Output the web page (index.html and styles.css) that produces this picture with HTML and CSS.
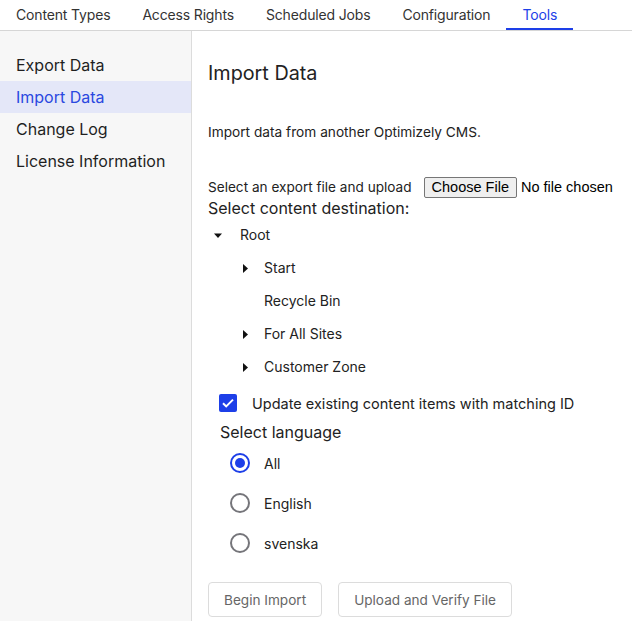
FILE: index.html
```html
<!DOCTYPE html>
<html lang="en">
<head>
<meta charset="utf-8">
<title>Import Data</title>
<link rel="stylesheet" href="styles.css">
</head>
<body>
<nav class="tabs">
  <a class="tab">Content Types</a>
  <a class="tab">Access Rights</a>
  <a class="tab">Scheduled Jobs</a>
  <a class="tab">Configuration</a>
  <a class="tab active">Tools</a>
</nav>
<div class="layout">
  <aside class="sidebar">
    <a class="side-item">Export Data</a>
    <a class="side-item active">Import Data</a>
    <a class="side-item">Change Log</a>
    <a class="side-item">License Information</a>
  </aside>
  <main class="main">
    <h1 class="title">Import Data</h1>
    <p class="desc">Import data from another Optimizely CMS.</p>
    <div class="file-row">
      <span class="file-label">Select an export file and upload</span>
      <span class="file-btn">Choose File</span>
      <span class="file-status">No file chosen</span>
    </div>
    <div class="dest-label">Select content destination:</div>
    <ul class="tree">
      <li class="node root">
        <svg class="caret" viewBox="0 0 16 16"><path d="M4 6.5h8l-4 4.5z"/></svg>
        <span>Root</span>
      </li>
      <li class="node child">
        <svg class="caret" viewBox="0 0 16 16"><path d="M9 4l5 4.5-5 4.5z"/></svg>
        <span>Start</span>
      </li>
      <li class="node child">
        <span class="caret"></span>
        <span>Recycle Bin</span>
      </li>
      <li class="node child">
        <svg class="caret" viewBox="0 0 16 16"><path d="M9 4l5 4.5-5 4.5z"/></svg>
        <span>For All Sites</span>
      </li>
      <li class="node child">
        <svg class="caret" viewBox="0 0 16 16"><path d="M9 4l5 4.5-5 4.5z"/></svg>
        <span>Customer Zone</span>
      </li>
    </ul>
    <label class="check-row">
      <span class="checkbox"><svg viewBox="0 0 18 18"><path d="M4 9.2l3.2 3.2L14 5.6" fill="none" stroke="#fff" stroke-width="2"/></svg></span>
      <span>Update existing content items with matching ID</span>
    </label>
    <div class="lang-label">Select language</div>
    <div class="radios">
      <label class="radio-row"><span class="radio checked"></span><span>All</span></label>
      <label class="radio-row"><span class="radio"></span><span>English</span></label>
      <label class="radio-row"><span class="radio"></span><span>svenska</span></label>
    </div>
    <div class="actions">
      <button class="btn">Begin Import</button>
      <button class="btn">Upload and Verify File</button>
    </div>
  </main>
</div>
</body>
</html>
```
FILE: styles.css
```css
* { box-sizing: border-box; }
html, body { margin: 0; padding: 0; }
body {
  font-family: Inter, "Noto Sans", "Liberation Sans", sans-serif;
  color: #222;
  background: #fff;
  width: 632px;
  height: 621px;
  overflow: hidden;
}
.tabs {
  display: flex;
  height: 31px;
  border-bottom: 1px solid #d6d6d6;
}
.tab {
  padding: 0 16px;
  font-size: 14px;
  letter-spacing: -0.16px;
  line-height: 30px;
  height: 30px;
  color: #333;
}
.tab.active {
  color: #1d3fe8;
  border-bottom: 2px solid #1d3fe8;
  margin-bottom: -1px;
  height: 30px;
}
.layout {
  display: flex;
  height: 590px;
}
.sidebar {
  width: 192px;
  flex: none;
  background: #f7f7f7;
  border-right: 1px solid #dcdcdc;
  padding-top: 18px;
  display: flex;
  flex-direction: column;
}
.side-item {
  display: block;
  height: 32px;
  line-height: 32px;
  padding-left: 16px;
  font-size: 16px;
  color: #1f1f1f;
}
.side-item.active {
  background: #e4e7f8;
  color: #2a48e0;
}
.main {
  flex: 1;
  padding: 30px 0 0 16px;
}
.title {
  margin: 0;
  font-size: 19.8px;
  line-height: 24px;
  font-weight: 400;
  color: #222;
}
.desc {
  margin: 37px 0 0;
  font-size: 13.7px;
  line-height: 20px;
}
.file-row {
  margin-top: 35px;
  display: flex;
  align-items: center;
  height: 20px;
  font-size: 13.6px;
  white-space: nowrap;
}
.file-label { margin-right: 12px; }
.file-btn {
  font-family: "Liberation Sans", Arial, sans-serif;
  font-size: 14.5px;
  height: 21px;
  line-height: 19px;
  padding: 0 7px;
  background: #efefef;
  border: 1px solid #767676;
  border-radius: 2px;
  color: #000;
}
.file-status {
  font-family: "Liberation Sans", Arial, sans-serif;
  font-size: 14.5px;
  margin-left: 4px;
  color: #000;
}
.dest-label {
  margin-top: 1px;
  font-size: 16px;
  line-height: 20px;
}
.tree {
  list-style: none;
  margin: 0;
  padding: 0;
}
.node {
  display: flex;
  align-items: center;
  height: 33px;
  font-size: 14px;
}
.node.root { padding-left: 2px; }
.node.child { padding-left: 26px; }
.caret {
  width: 16px;
  height: 16px;
  flex: none;
  margin-right: 14px;
  fill: #111;
}
.check-row {
  display: flex;
  align-items: center;
  height: 24px;
  margin-top: 8px;
  padding-left: 11px;
  font-size: 14.5px;
}
.checkbox {
  width: 18px;
  height: 18px;
  background: #1d3fe8;
  border-radius: 2px;
  margin-right: 15px;
  display: flex;
}
.checkbox svg { width: 18px; height: 18px; }
.lang-label {
  margin-top: 7px;
  padding-left: 12px;
  font-size: 16px;
  line-height: 20px;
}
.radios { margin-top: 1px; }
.radio-row {
  display: flex;
  align-items: center;
  height: 40px;
  padding-left: 22px;
  font-size: 14px;
}
.radio {
  width: 20px;
  height: 20px;
  border-radius: 50%;
  border: 2px solid #75757a;
  margin-right: 14px;
  flex: none;
  display: flex;
  align-items: center;
  justify-content: center;
}
.radio.checked { border-color: #1d3fe8; }
.radio.checked::after {
  content: "";
  width: 10px;
  height: 10px;
  border-radius: 50%;
  background: #1d3fe8;
}
.actions {
  margin-top: 19px;
  display: flex;
  gap: 16px;
}
.btn {
  font-family: Inter, "Noto Sans", sans-serif;
  font-size: 13.6px;
  height: 35px;
  padding: 0 15px;
  background: #fff;
  color: #666;
  border: 1px solid #dcdcdc;
  border-radius: 4px;
}
```
